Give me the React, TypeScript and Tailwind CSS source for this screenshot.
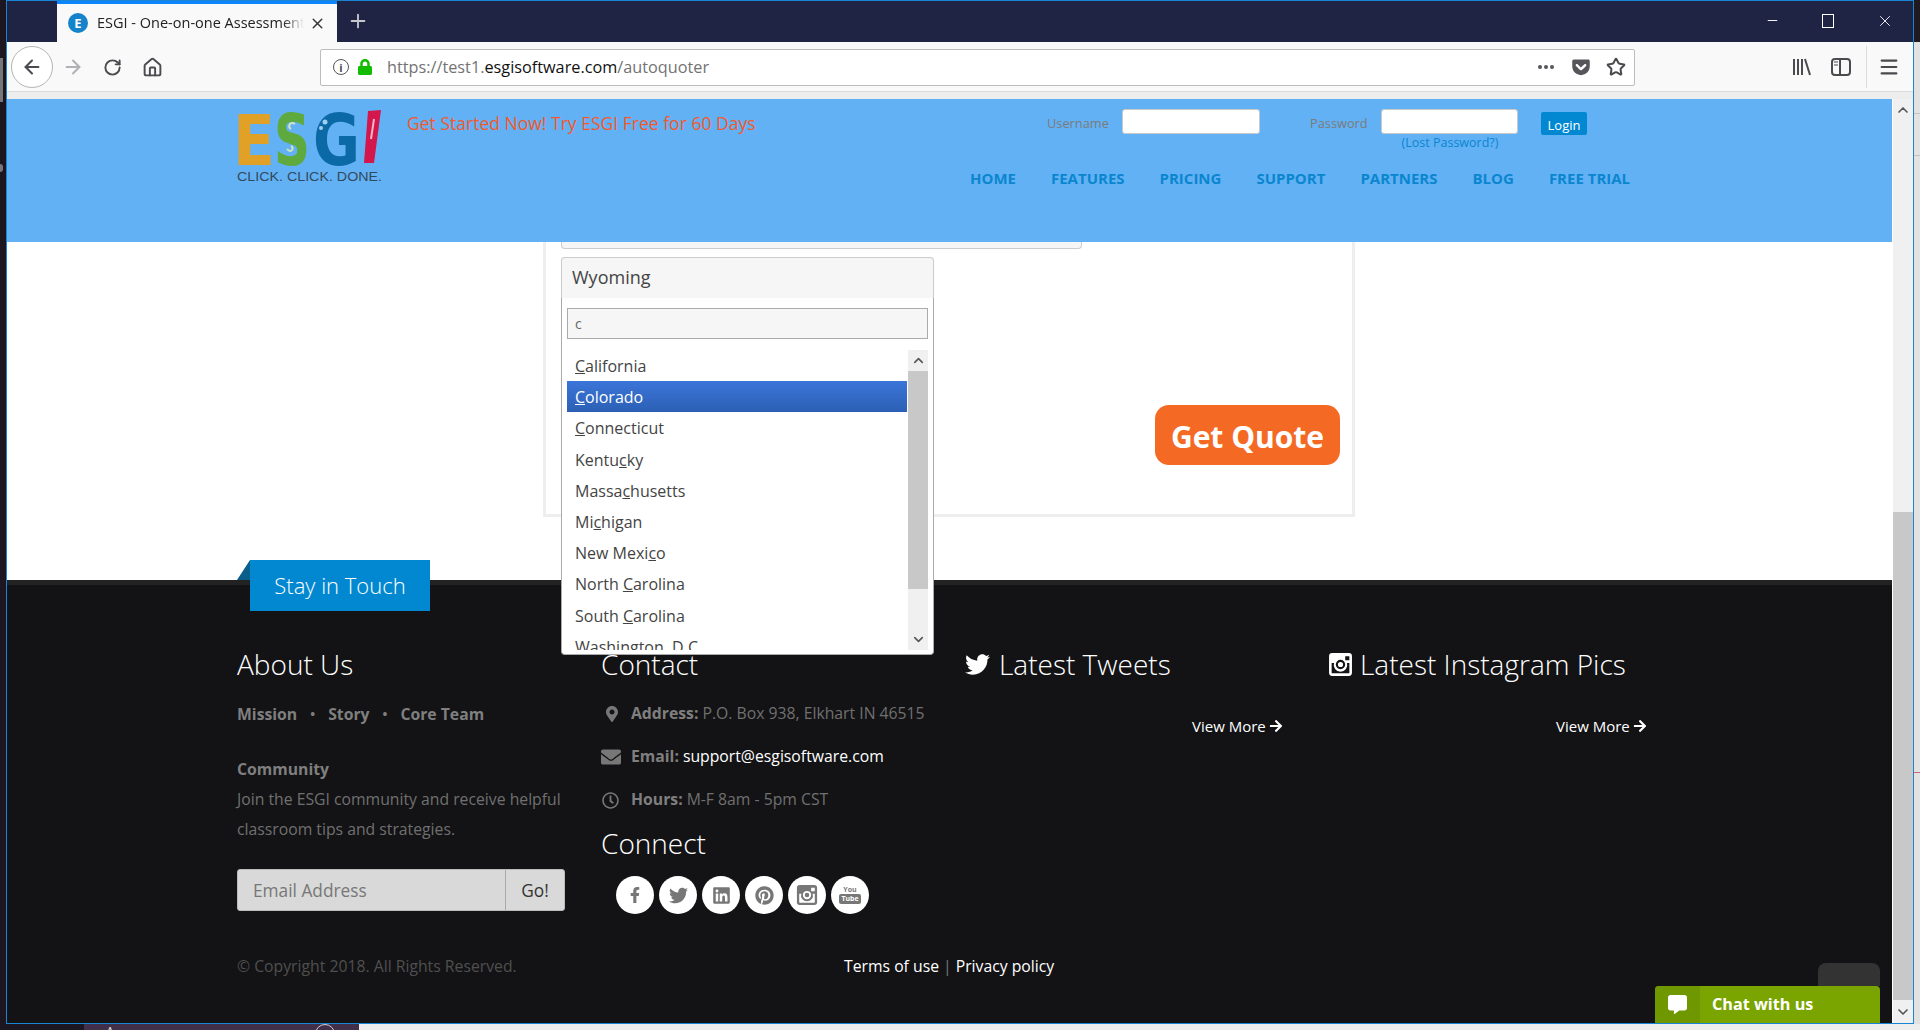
import React from 'react';
import { ArrowLeft, ArrowRight, RotateCw, Home, Star, X, Plus, ChevronUp, ChevronDown, Minus, Menu } from 'lucide-react';
import {
  FaTwitter, FaMapMarkerAlt, FaEnvelope, FaRegClock, FaFacebookF, FaLinkedin, FaPinterest,
  FaArrowRight, FaCommentAlt, FaLock, FaGetPocket,
} from 'react-icons/fa';

const navItems = ['HOME', 'FEATURES', 'PRICING', 'SUPPORT', 'PARTNERS', 'BLOG', 'FREE TRIAL'];

const states: [string, string, string][] = [
  ['', 'C', 'alifornia'],
  ['', 'C', 'olorado'],
  ['', 'C', 'onnecticut'],
  ['Kentu', 'c', 'ky'],
  ['Massa', 'c', 'husetts'],
  ['Mi', 'c', 'higan'],
  ['New Mexi', 'c', 'o'],
  ['North ', 'C', 'arolina'],
  ['South ', 'C', 'arolina'],
  ['Washington, D.', 'C', ''],
];

const Logo = () => (
  <svg width="146" height="76" viewBox="0 0 146 76">
    <text x="-4" y="56" fontFamily="DejaVu Sans" fontWeight="700" fontSize="70" fill="#e0a126" textLength="42" lengthAdjust="spacingAndGlyphs">E</text>
    <text x="37" y="56" fontFamily="DejaVu Sans" fontWeight="700" fontSize="72" fill="#5eaa3f" textLength="36" lengthAdjust="spacingAndGlyphs">S</text>
    <text x="76" y="56" fontFamily="DejaVu Sans" fontWeight="700" fontSize="72" fill="#0b69a5" textLength="47" lengthAdjust="spacingAndGlyphs">G</text>
    <path d="M131 2 L144 1 L137 54 L127 54 Z" fill="#d3164c" />
    <path d="M137 10 L134 30" stroke="#f3b6c6" strokeWidth="2" fill="none" />
    <path d="M58 15 c-5 -3 -8 3 -4 5 M50 40 c4 5 8 -1 4 -3" stroke="#cfe6b8" strokeWidth="2" fill="none" />
    <circle cx="88" cy="13" r="2.5" fill="#9fd0ee" />
    <circle cx="84" cy="19" r="2" fill="#9fd0ee" />
    <text x="0" y="72" fontFamily="Liberation Sans" fontSize="13" fill="#33495a" textLength="145" lengthAdjust="spacingAndGlyphs">CLICK. CLICK. DONE.</text>
  </svg>
);

// old-style camera glyph: solid square with the lens knocked out
const InstagramMark = ({ size }: { size: number }) => (
  <svg width={size} height={size} viewBox="0 0 24 24">
    <path
      fill="currentColor"
      fillRule="evenodd"
      d="M4 1h16a3 3 0 0 1 3 3v16a3 3 0 0 1-3 3H4a3 3 0 0 1-3-3V4a3 3 0 0 1 3-3Zm12.5 3v4h4V4h-4ZM12 7.5a4.5 4.5 0 1 0 0 9 4.5 4.5 0 0 0 0-9Zm0 2a2.5 2.5 0 1 1 0 5 2.5 2.5 0 0 1 0-5ZM3.5 10.5V20c0 .3.2.5.5.5h16c.3 0 .5-.2.5-.5v-9.500h-2.300a6.500 6.500 0 1 1-12.400 0H3.500Z"
    />
  </svg>
);

const Toolbar = () => (
  <div className="shrink-0 h-[50px] pt-px bg-[#f9f9fa] border-b border-[#dcdcdc] flex items-center text-[#4a4a4f]">
    <div className="ml-[4px] w-[42px] h-[42px] rounded-full border border-[#b5b5b5] bg-white flex items-center justify-center">
      <ArrowLeft size={22} strokeWidth={2.2} />
    </div>
    <ArrowRight size={22} strokeWidth={2.2} className="ml-[9px] text-[#b1b1b3]" />
    <RotateCw size={19} strokeWidth={2.4} className="ml-[19px]" />
    <Home size={21} strokeWidth={2.2} className="ml-[20px]" />
    <div className="ml-[157px] w-[1315px] h-[37px] bg-white border border-[#bdbdbd] rounded-[2px] flex items-center">
      <div className="ml-[12px] w-[16px] h-[16px] rounded-full border-[1.5px] border-[#55555a] flex items-center justify-center text-[11px] leading-none font-bold">i</div>
      <FaLock size={16} className="ml-[8px] text-[#12bc00]" />
      <div className="ml-[14px] text-[16.25px] text-[#737373] leading-none">
        https://test1.<span className="text-[#111]">esgisoftware.com</span>/autoquoter
      </div>
      <div className="ml-auto flex items-center">
        <div className="flex gap-[2px]">
          <span className="w-[4px] h-[4px] rounded-full bg-[#55555a]" />
          <span className="w-[4px] h-[4px] rounded-full bg-[#55555a]" />
          <span className="w-[4px] h-[4px] rounded-full bg-[#55555a]" />
        </div>
        <FaGetPocket size={20} className="ml-[17px] text-[#55555a]" />
        <Star size={20} strokeWidth={2.4} className="ml-[15px] mr-[8px]" />
      </div>
    </div>
    <svg className="ml-[157px]" width="20" height="20" viewBox="0 0 20 20" stroke="#4a4a4f" strokeWidth="2" fill="none">
      <path d="M2 2v16M6 2v16M10 2v16M13 2l5 16" />
    </svg>
    <svg className="ml-[19px]" width="20" height="20" viewBox="0 0 20 20" stroke="#4a4a4f" strokeWidth="2" fill="none">
      <rect x="1" y="2" width="18" height="16" rx="3" />
      <path d="M9 2v16" />
      <path d="M3 5h4M3 8h4" strokeWidth="1.2" />
    </svg>
    <div className="ml-[15px] w-px h-[42px] bg-[#dcdcdc]" />
    <Menu size={22} strokeWidth={2.4} className="ml-[11px]" />
  </div>
);

const TabBar = () => (
  <div className="shrink-0 h-[41px] bg-[#1f2344] flex text-white">
    <div className="ml-[50px] w-[280px] h-[41px] bg-[#f9f9fa] border-t-[3px] border-[#0a84ff] flex items-center text-[#222]">
      <div className="ml-[11px] w-[20px] h-[20px] rounded-full bg-[#1583c9] text-white text-[13px] font-bold flex items-center justify-center leading-none">E</div>
      <div className="ml-[9px] w-[207px] text-[14.5px] whitespace-nowrap overflow-hidden [mask-image:linear-gradient(to_right,black_90%,transparent)]">
        ESGI - One-on-one Assessment Software
      </div>
      <X size={17} strokeWidth={2} className="ml-[5px] text-[#333]" />
    </div>
    <Plus size={22} strokeWidth={2} className="ml-[10px] mt-[9px] text-[#c8c8cf]" />
    <div className="ml-auto flex items-center gap-[42px] pr-[19px] mb-[2px]">
      <Minus size={15} strokeWidth={1.5} />
      <div className="w-[12px] h-[14px] border border-white" />
      <X size={18} strokeWidth={1.2} />
    </div>
  </div>
);

const Header = () => (
  <header className="h-[143px] bg-[#62b1f5] flex pl-[230px] pt-[10px]">
    <div className="w-[170px]">
      <Logo />
    </div>
    <div className="flex flex-col">
      <div className="flex h-[52px]">
        <div className="w-[639px] text-[17.55px] leading-[28px] text-[#f4592b] whitespace-nowrap">Get Started Now! Try ESGI Free for 60 Days</div>
        <div className="flex items-start text-[12.8px] text-[#7b7b7b]">
          <div className="w-[76px] pl-[1px] leading-[28px]">Username</div>
          <div className="w-[138px] h-[25px] bg-white rounded-[3px] border border-[#c9c9c9]" />
          <div className="ml-[49px] w-[72px] pl-[1px] leading-[28px]">Password</div>
          <div className="w-[137px]">
            <div className="h-[25px] bg-white rounded-[3px] border border-[#c9c9c9]" />
            <div className="pl-[1px] pt-px text-center text-[12.5px] leading-[16px] text-[#0a86cf] whitespace-nowrap">(Lost Password?)</div>
          </div>
          <div className="ml-[23px] mt-[3px] w-[46px] h-[23px] rounded-[2px] bg-[#0288d1] text-white text-[13px] leading-[26px] text-center">Login</div>
        </div>
      </div>
      <nav className="h-[34px] pl-[563px] flex items-center gap-[35px] text-[15px] font-bold text-[#0a86cf] whitespace-nowrap">
        {navItems.map((n) => (
          <span key={n}>{n}</span>
        ))}
      </nav>
    </div>
  </header>
);

const StateDropdown = () => (
  <div className="absolute left-0 top-full w-[373px] h-[357px] z-20 bg-white border border-[#aaa] border-t-0 rounded-b-[4px] px-[5px] pt-[10px]">
    <div className="h-[31px] bg-[#f6f6f6] border border-[#aaa] pl-[7px] text-[14px] leading-[30px] text-[#666]">c</div>
    <div className="mt-[11px] h-[300px] flex gap-px overflow-hidden">
      <ul className="w-[340px] text-[16px] text-[#444] leading-[31.2px]">
        {states.map(([a, c, b], i) => (
          <li
            key={a + c + b}
            className={i === 1 ? 'h-[31.2px] pl-[8px] pt-px text-white bg-gradient-to-b from-[#3b75d9] to-[#2c60b5]' : 'h-[31.2px] pl-[8px] pt-px'}
          >
            {a}
            <span className="underline">{c}</span>
            {b}
          </li>
        ))}
      </ul>
      <div className="w-[20px] bg-[#f0f0f0] flex flex-col items-center text-[#555]">
        <div className="h-[21px] flex items-center"><ChevronUp size={15} strokeWidth={2.5} /></div>
        <div className="w-full h-[218px] bg-[#c8c8c8]" />
        <div className="mt-auto h-[21px] flex items-center"><ChevronDown size={15} strokeWidth={2.5} /></div>
      </div>
    </div>
  </div>
);

const Content = () => (
  <section className="relative z-10 h-[338px] bg-white">
    <div className="ml-[536px] w-[812px] h-[275px] border-x-[3px] border-b-[3px] border-[#eeeeee] pl-[15px] flex flex-col">
      <div className="w-[521px] h-[7px] bg-[#f6f6f6] border-x border-b border-[#ccc] rounded-b-[4px]" />
      <div className="relative mt-[8px] w-[373px]">
        <div className="h-[41px] bg-[#f6f6f6] border border-[#ccc] border-b-0 rounded-t-[4px] pl-[10px] text-[18px] leading-[38px] text-[#444]">Wyoming</div>
        <StateDropdown />
      </div>
      <div className="self-end mr-[12px] mt-[107px] w-[185px] h-[60px] rounded-[14px] bg-[#f46a25] text-white font-bold text-[30px] leading-[63px] text-center whitespace-nowrap">Get Quote</div>
    </div>
  </section>
);

const YoutubeMark = () => (
  <div className="flex flex-col items-center leading-none text-[#777] font-bold">
    <span className="text-[7px] leading-[8px]">You</span>
    <span className="text-[7px] leading-[10px] px-[2px] bg-[#777] text-white rounded-[2px]">Tube</span>
  </div>
);

const Footer = () => (
  <footer className="relative h-[443px] bg-[#131315] border-t-[5px] border-[#222] pl-[230px]">
    <div className="relative z-10 -mt-[25px] ml-[13px] w-[180px] h-[51px] bg-[#0288d1] text-white text-[22px] font-light leading-[50px] text-center">
      <div className="absolute right-full top-0 w-[13px] h-[20px] bg-[#0a5f8a] [clip-path:polygon(100%_0,100%_100%,0_100%)]" />
      Stay in Touch
    </div>
    <div className="mt-[34px] grid grid-cols-[364px_364px_363px_1fr]">
      <div>
        <h3 className="h-[40px] text-[28px] font-light leading-[38px] text-white">About Us</h3>
        <div className="mt-[17px] flex items-center text-[15.75px] font-bold leading-[24px] text-[#7f7f7f]">
          <span>Mission</span>
          <span className="mx-[13px] text-[13px]">•</span>
          <span>Story</span>
          <span className="mx-[13px] text-[13px]">•</span>
          <span>Core Team</span>
        </div>
        <div className="mt-[31px] text-[15.75px] font-bold leading-[24px] text-[#7f7f7f]">Community</div>
        <p className="mt-[3px] text-[15.75px] leading-[30px] text-[#707070] whitespace-nowrap">
          Join the ESGI community and receive helpful<br />classroom tips and strategies.
        </p>
        <div className="mt-[25px] w-[328px] h-[42px] flex bg-[#d9d9d9] rounded-[3px] border border-[#bbb] text-[17.3px] leading-[41px]">
          <div className="w-[268px] pl-[15px] text-[#777] border-r border-[#aaa]">Email Address</div>
          <div className="flex-1 text-center text-[#333]">Go!</div>
        </div>
      </div>
      <div>
        <h3 className="h-[40px] text-[28px] font-light leading-[38px] text-white">Contact</h3>
        <div className="mt-[17px] flex items-center h-[24px] text-[15.75px] text-[#707070] whitespace-nowrap">
          <div className="w-[30px] pl-[3px]"><FaMapMarkerAlt size={16} className="text-[#777]" /></div>
          <b className="text-[#7f7f7f] mr-[4px]">Address:</b>P.O. Box 938, Elkhart IN 46515
        </div>
        <div className="mt-[19px] flex items-center h-[24px] text-[15.75px] text-white whitespace-nowrap">
          <div className="w-[30px]"><FaEnvelope size={20} className="text-[#777]" /></div>
          <b className="text-[#7f7f7f] mr-[4px]">Email:</b>support@esgisoftware.com
        </div>
        <div className="mt-[19px] flex items-center h-[24px] text-[15.75px] text-[#707070] whitespace-nowrap">
          <div className="w-[30px] pl-[1px]"><FaRegClock size={17} className="text-[#777]" /></div>
          <b className="text-[#7f7f7f] mr-[4px]">Hours:</b>M-F 8am - 5pm CST
        </div>
        <h3 className="mt-[11px] h-[40px] text-[28px] font-light leading-[40px] text-white">Connect</h3>
        <div className="mt-[13px] pl-[15px] flex gap-[5px] text-[#777]">
          <div className="w-[38px] h-[38px] rounded-full bg-white flex items-center justify-center"><FaFacebookF size={16} /></div>
          <div className="w-[38px] h-[38px] rounded-full bg-white flex items-center justify-center"><FaTwitter size={19} /></div>
          <div className="w-[38px] h-[38px] rounded-full bg-white flex items-center justify-center"><FaLinkedin size={19} /></div>
          <div className="w-[38px] h-[38px] rounded-full bg-white flex items-center justify-center"><FaPinterest size={19} /></div>
          <div className="w-[38px] h-[38px] rounded-full bg-white flex items-center justify-center"><InstagramMark size={22} /></div>
          <div className="w-[38px] h-[38px] rounded-full bg-white flex items-center justify-center"><YoutubeMark /></div>
        </div>
      </div>
      <div>
        <h3 className="h-[40px] pb-[2px] flex items-center text-[28px] font-light text-white whitespace-nowrap">
          <FaTwitter size={25} className="mr-[9px]" />Latest Tweets
        </h3>
        <div className="mt-[31px] ml-[227px] flex items-center h-[20px] text-[15px] text-white whitespace-nowrap">
          View More<FaArrowRight size={14} className="ml-[3px]" />
        </div>
      </div>
      <div>
        <h3 className="h-[40px] pb-[2px] flex items-center text-[28px] font-light text-white whitespace-nowrap">
          <span className="mr-[7px]"><InstagramMark size={25} /></span>Latest Instagram Pics
        </h3>
        <div className="mt-[31px] ml-[228px] flex items-center h-[20px] text-[15px] text-white whitespace-nowrap">
          View More<FaArrowRight size={14} className="ml-[3px]" />
        </div>
      </div>
    </div>
    <div className="mt-[40px] flex text-[15.75px] leading-[24px]">
      <div className="w-[607px] text-[#4f4f4f]">© Copyright 2018. All Rights Reserved.</div>
      <div className="text-white flex">
        <span>Terms of use</span>
        <span className="mx-[4px] text-[#777]">|</span>
        <span>Privacy policy</span>
      </div>
    </div>
    {/* back to top + chat widget float over the footer */}
    <div className="absolute right-[12px] bottom-[37px] w-[62px] h-[23px] bg-[#333] rounded-t-[8px]" />
    <div className="absolute right-[12px] bottom-0 w-[225px] h-[37px] bg-[#7aa500] rounded-t-[4px] flex items-center">
      <div className="w-[45px] h-full bg-[#6f9800] rounded-tl-[4px] flex items-center justify-center">
        <FaCommentAlt size={19} className="text-white" />
      </div>
      <div className="ml-[12px] text-[16.2px] font-bold text-white">Chat with us</div>
    </div>
  </footer>
);

const PageScrollbar = () => (
  <div className="w-[21px] border-l border-white bg-[#f0f0f0] flex flex-col items-center text-[#555]">
    <div className="h-[21px] flex items-center"><ChevronUp size={16} strokeWidth={2.5} /></div>
    <div className="mt-[392px] w-full h-[488px] bg-[#c8c8c8]" />
    <div className="mt-auto h-[22px] flex items-center"><ChevronDown size={16} strokeWidth={2.5} /></div>
  </div>
);

export default function App() {
  return (
    <div className="w-[1920px] h-[1030px] overflow-hidden bg-[#1c1620] flex flex-col font-['Open_Sans',sans-serif]">
      <div className="shrink-0 h-[1024px] flex">
        <div className="w-[6px] flex flex-col items-start">
          <div className="mt-[58px] w-[3px] h-[44px] bg-[#777]" />
          <div className="mt-[62px] w-[3px] h-[8px] rounded-r-full bg-[#777]" />
        </div>
        <div className="w-[1908px] flex flex-col border border-[#1a84d4]">
          <TabBar />
          <Toolbar />
          <div className="shrink-0 h-[7px] bg-[#ededed]" />
          <div className="flex-1 flex">
            <div className="w-[1885px]">
              <Header />
              <Content />
              <Footer />
            </div>
            <PageScrollbar />
          </div>
        </div>
        <div className="flex-1 bg-[#e2e2e2] flex flex-col">
          <div className="h-[42px] bg-[#1e1a20]" />
          <div className="mt-[71px] h-px bg-[#c4c4c4]" />
          <div className="mt-[41px] h-px bg-[#c4c4c4]" />
          <div className="mt-[616px] h-px bg-[#c96a7a]" />
        </div>
      </div>
      <div className="flex-1 flex overflow-hidden">
        <div className="ml-[84px] w-[275px] bg-[#42304a] text-[#cfcfcf] text-[16px] leading-[18px] flex">
          <span className="ml-[21px]">Apps</span>
          <span className="ml-[173px] w-[20px] h-[20px] shrink-0 rounded-full border border-[#cfcfcf]" />
        </div>
        <div className="flex-1 bg-[#eeeeee]" />
      </div>
    </div>
  );
}
